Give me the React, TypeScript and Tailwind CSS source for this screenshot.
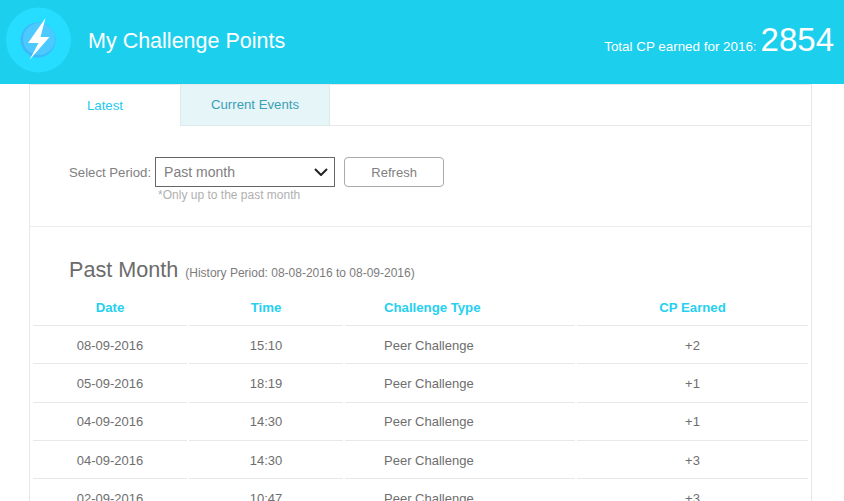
const rows = [
  ["08-09-2016", "15:10", "Peer Challenge", "+2"],
  ["05-09-2016", "18:19", "Peer Challenge", "+1"],
  ["04-09-2016", "14:30", "Peer Challenge", "+1"],
  ["04-09-2016", "14:30", "Peer Challenge", "+3"],
  ["02-09-2016", "10:47", "Peer Challenge", "+3"],
];

const BoltLogo = () => (
  <svg width="66" height="66" viewBox="6 7 66 66" className="shrink-0">
    <circle cx="38.5" cy="40" r="32.5" fill="#26dcff" />
    <circle cx="38" cy="40" r="17.5" fill="#3db9fb" />
    <circle cx="39" cy="39" r="16" fill="#4cc9ff" />
    <path d="M45.5 18 L28 43 L38.5 43 L29.5 60 L49.5 37 L40.5 37 Z" fill="#ffffff" />
  </svg>
);

export default function App() {
  return (
    <div className="h-[501px] overflow-hidden bg-white font-['Liberation_Sans',Arial,sans-serif]">
      <header className="flex h-[84px] items-center justify-between bg-[#1ccfed] pl-[6px] pr-[10px] text-white">
        <div className="flex items-center pb-[4px]">
          <BoltLogo />
          <h1 className="ml-[16px] mt-[3px] text-[21.5px] leading-none">My Challenge Points</h1>
        </div>
        <div className="flex items-baseline pb-[4px]">
          <span className="text-[13.4px]">Total CP earned for 2016:</span>
          <span className="ml-[4px] text-[33px] leading-none">2854</span>
        </div>
      </header>

      <main className="ml-[29px] h-[417px] w-[783px] border-x border-t border-[#e8e8e8]">
        <div className="flex h-[41px] text-[13.2px]">
          <div className="flex w-[150px] items-center justify-center pt-[1px] text-[#24c9f0]">Latest</div>
          <div className="flex h-[41px] w-[150px] items-center justify-center border-x border-b border-[#dfe9ec] bg-[#e6f5f8] pb-[1px] text-[#3a9fb5]">
            Current Events
          </div>
          <div className="flex-1 border-b border-[#e8e8e8]" />
        </div>

        <section className="h-[101px] border-b border-[#ececec] pl-[39px] pt-[31px]">
          <div className="flex items-start">
            <label className="mr-[4px] mt-[8px] text-[13.2px] leading-[16px] text-[#808080]">Select Period:</label>
            <div>
              <div className="flex h-[30px] w-[180px] items-center justify-between border border-[#666666] pl-[8px] pr-[6px] text-[14px] text-[#808080]">
                <span>Past month</span>
                <svg width="14" height="8" viewBox="0 0 14 8" fill="none" stroke="#222222" strokeWidth="2">
                  <path d="M1 1l6 6 6-6" />
                </svg>
              </div>
              <p className="ml-[3px] text-[12px] leading-[16px] text-[#b0b0b0]">*Only up to the past month</p>
            </div>
            <button className="ml-[9px] h-[30px] w-[100px] rounded-[4px] border border-[#aaaaaa] pt-[1px] text-[13px] text-[#808080]">
              Refresh
            </button>
          </div>
        </section>

        <section className="pt-[29px]">
          <h2 className="ml-[39px] flex items-baseline text-[#6b6b6b]">
            <span className="text-[21.6px] leading-[28px]">Past Month</span>
            <span className="ml-[7px] text-[12px] text-[#7c7c7c]">(History Period: 08-08-2016 to 08-09-2016)</span>
          </h2>
          <table className="ml-px mt-[3px] w-[779px] table-fixed border-separate border-spacing-x-[2px] border-spacing-y-0 text-[13px]">
            <thead>
              <tr className="text-[13.2px] text-[#26d0f0]">
                <th className="h-[39px] w-[154px] border-b border-[#e8e8e8] pt-[3px] font-bold">Date</th>
                <th className="w-[154px] border-b border-[#e8e8e8] pt-[3px] font-bold">Time</th>
                <th className="w-[230px] border-b border-[#e8e8e8] pl-[39px] pt-[3px] text-left font-bold">Challenge Type</th>
                <th className="border-b border-[#e8e8e8] pt-[3px] font-bold">CP Earned</th>
              </tr>
            </thead>
            <tbody className="text-[#6e6e6e]">
              {rows.map((row, i) => (
                <tr key={i}>
                  <td className="h-[38.3px] border-b border-[#e8e8e8] pt-[2px] text-center">{row[0]}</td>
                  <td className="border-b border-[#e8e8e8] pt-[2px] text-center">{row[1]}</td>
                  <td className="border-b border-[#e8e8e8] pl-[39px] pt-[2px]">{row[2]}</td>
                  <td className="border-b border-[#e8e8e8] pt-[2px] text-center">{row[3]}</td>
                </tr>
              ))}
            </tbody>
          </table>
        </section>
      </main>
    </div>
  );
}
